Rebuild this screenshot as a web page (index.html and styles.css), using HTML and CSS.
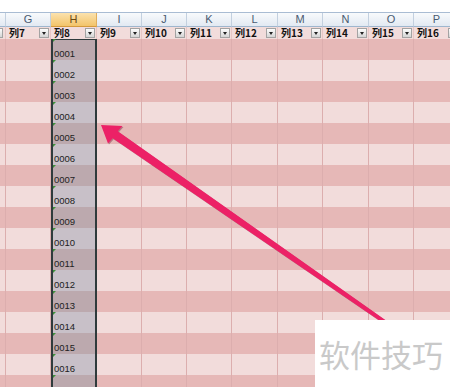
FILE: index.html
```html
<!DOCTYPE html>
<html lang="zh-CN">
<head>
  <meta charset="UTF-8">
  <title>表格 - 列8</title>
  <link rel="stylesheet" href="styles.css">
</head>
<body>
  <div class="topbar"></div>
  <div class="sheet" id="sheet"></div>

  <svg class="arrow" width="450" height="387" viewBox="0 0 450 387">
    <polygon points="101,125 122.5,126 117.8,131.2 396,327.4 393.9,330.6 112.7,138.3 108,143.5" />
  </svg>

  <div class="watermark">软件技巧</div>

  <script>
    const sheet = document.getElementById('sheet');
    const letters = ['', 'G', 'H', 'I', 'J', 'K', 'L', 'M', 'N', 'O', 'P'];
    const SEL = 2; // column H
    const ROWS = 17;

    // column letters
    letters.forEach((l, i) => {
      const c = document.createElement('div');
      c.className = 'col-head' + (i === SEL ? ' active' : '');
      c.textContent = l;
      sheet.appendChild(c);
    });

    // table header with filter buttons
    letters.forEach((l, i) => {
      const c = document.createElement('div');
      c.className = 'tbl-head' + (i === 0 ? ' stub' : '');
      if (i > 0) {
        const label = document.createElement('span');
        label.className = 'label';
        label.textContent = '列' + (i + 6);
        c.appendChild(label);
      }
      const btn = document.createElement('span');
      btn.className = 'filter';
      c.appendChild(btn);
      sheet.appendChild(c);
    });

    // banded data rows
    for (let r = 0; r < ROWS; r++) {
      letters.forEach((l, i) => {
        const c = document.createElement('div');
        c.className = 'cell ' + (r % 2 === 0 ? 'dark' : 'light');
        if (i === SEL) {
          c.className += ' sel' + (r === 0 ? ' first' : '');
          c.textContent = String(r + 1).padStart(4, '0');
        }
        sheet.appendChild(c);
      });
    }
  </script>
</body>
</html>
```

FILE: styles.css
```css
* {
  box-sizing: border-box;
}

body {
  margin: 0;
  width: 450px;
  height: 387px;
  overflow: hidden;
  position: relative;
  background: #fff;
  font-family: "Liberation Sans", Arial, sans-serif;
}

.topbar {
  height: 13px;
  background: #fff;
  border-bottom: 1px solid #a9bcd3;
}

.sheet {
  display: grid;
  grid-template-columns: 6px 45px 46px 45px 45px 45px 46px 45px 46px 45px 46px;
  grid-template-rows: 14px 12px;
  grid-auto-rows: 21px;
  width: 460px;
}

.col-head {
  display: flex;
  align-items: center;
  justify-content: center;
  background: linear-gradient(#f8fafc, #e2e9f2);
  border-right: 1px solid #c3d0df;
  border-bottom: 1px solid #9eb6ce;
  color: #4a5a70;
  font-size: 11px;
  line-height: 13px;
}

.col-head.active {
  background: linear-gradient(#fbe2ae, #f3c46a);
  border-right-color: #e1ae5c;
  border-bottom-color: #d49a3c;
  color: #6a4a12;
}

.tbl-head {
  display: flex;
  align-items: center;
  justify-content: space-between;
  background: #f2dcdb;
  border-right: 1px solid #e6c6c5;
  padding-left: 3px;
  color: #111;
}

.tbl-head.stub {
  justify-content: flex-end;
  padding-left: 0;
  overflow: hidden;
}

.tbl-head.stub .filter {
  margin-right: 2px;
}

.label {
  font: bold 10px/12px "Noto Sans CJK SC", "Liberation Sans", sans-serif;
  white-space: nowrap;
}

.filter {
  position: relative;
  flex: none;
  width: 10px;
  height: 10px;
  margin-right: 1px;
  border: 1px solid #a3a3a3;
  background: linear-gradient(#fdfdfd, #d5d5d5);
}

.filter::after {
  content: "";
  position: absolute;
  left: 2px;
  top: 3px;
  border-top: 3px solid #222;
  border-left: 2px solid transparent;
  border-right: 2px solid transparent;
}

.cell {
  display: flex;
  align-items: flex-end;
  padding: 0 0 1px 2px;
  border-right: 1px solid #dcaeae;
  font-size: 9.5px;
  line-height: 11px;
  color: #222;
}

.cell.dark {
  background: #e6b8b7;
}

.cell.light {
  background: #f2dcdb;
}

.cell.sel {
  position: relative;
  padding-left: 3px;
  border-right: none;
  background: #c8c0c8;
  box-shadow: inset 2px 0 #2f3b3c, inset -2px 0 #2f3b3c;
}

.cell.sel.dark {
  background: #bca9ae;
}

.cell.sel.first {
  box-shadow: inset 2px 0 #2f3b3c, inset -2px 0 #2f3b3c, inset 0 1px #2f3b3c;
}

.cell.sel::before {
  content: "";
  position: absolute;
  left: 2px;
  top: 0;
  border-top: 3px solid #3d8f3a;
  border-right: 3px solid transparent;
}

.arrow {
  position: absolute;
  left: 0;
  top: 0;
  pointer-events: none;
  fill: #ec2166;
  filter: drop-shadow(1px 1px 0.6px rgba(90, 0, 30, 0.35));
}

.watermark {
  position: absolute;
  left: 315px;
  top: 320px;
  width: 135px;
  height: 67px;
  display: flex;
  align-items: center;
  padding-left: 4px;
  background: #fff;
  color: #c9c9c9;
  font: 31px/1 "Noto Sans CJK SC", sans-serif;
}
```
